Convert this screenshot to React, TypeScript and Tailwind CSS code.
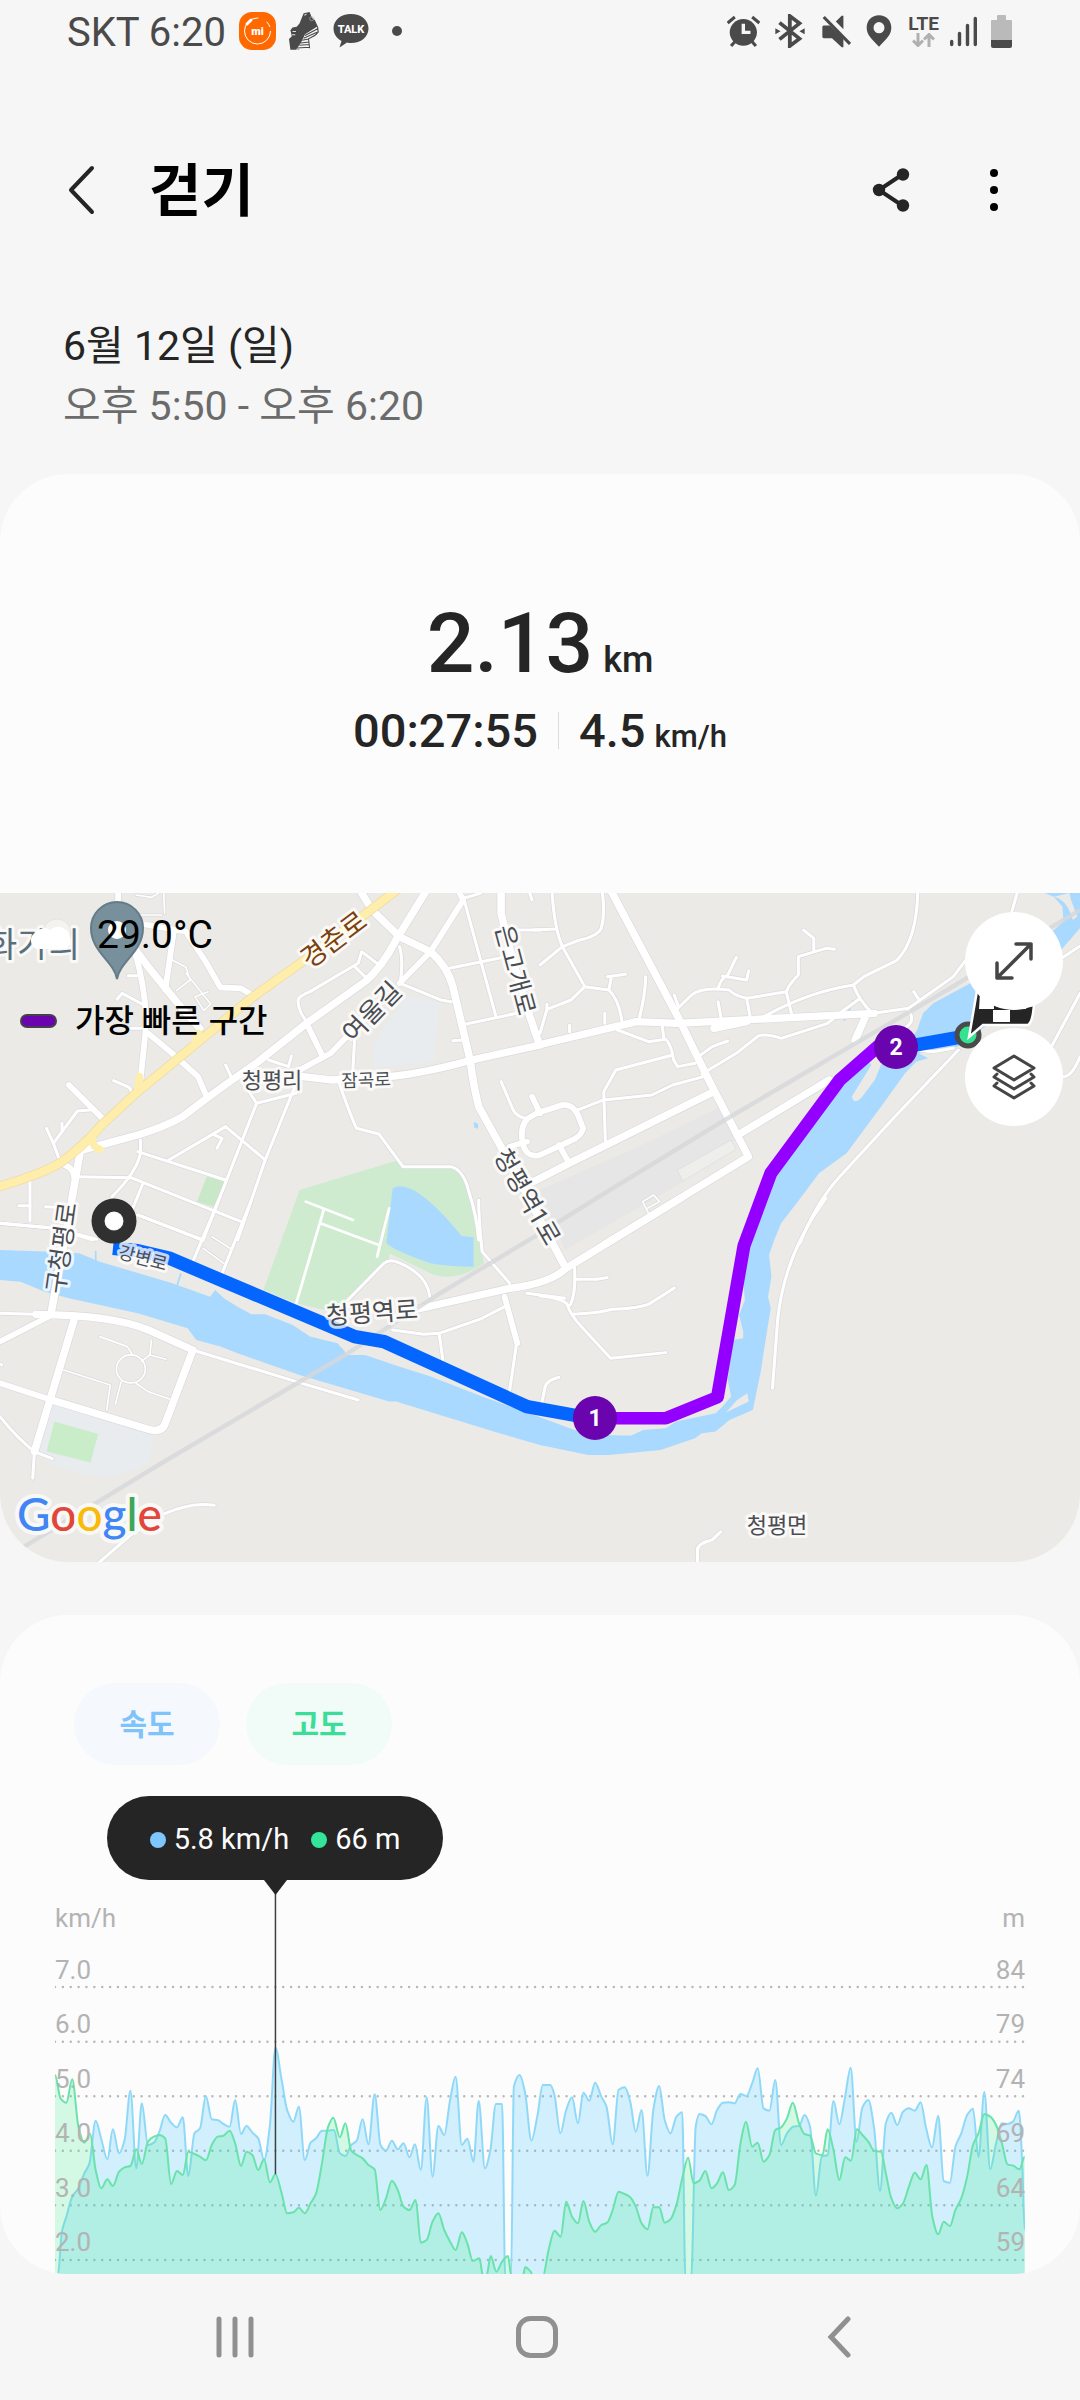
import { useState } from "react";

const ROADS: { tile: string; size: string; d: string }[] = [
  { tile: "nw", size: "xs", d: "M475 30L478 100M390 105H470M500 240L540 262L552 300L512 332M540 280L612 372L592 392L566 350L604 335M395 45L440 52L460 40" },
  { tile: "nw", size: "sm", d: "M655 740L770 840M1345 50L1440 410M1305 265L1480 228M1340 435L1500 400M1345 55L1395 40M1568 150L1490 150" },
  { tile: "nw", size: "sm", d: "M890 425Q862 385 866 358Q870 348 900 335L1040 250L1050 215L1095 250M1030 260L1065 295M1160 200Q1172 240 1162 310L1280 360L1310 365M1030 470L1024 580M1315 482L1345 480" },
  { tile: "nw", size: "sm", d: "M985 610Q1015 700 1035 745L1100 762L1170 860H1310Q1345 870 1360 930Q1385 1010 1390 1080" },
  { tile: "nw", size: "sm", d: "M720 630L745 670L860 640M745 670L590 1080M860 610L770 840L690 1080M655 555L672 592M780 540L838 560L846 528" },
  { tile: "nw", size: "sm", d: "M490 840L655 740M400 815L655 900M408 780V820Q395 880 325 950M225 890L380 893L700 1025M415 910L380 1000M400 1005L590 1080M622 765L645 775L630 805" },
  { tile: "nw", size: "sm", d: "M262 690L225 693L155 790L135 745M155 790L172 838M180 730V755M330 602L375 622L385 640M372 287H402M340 358L355 340L412 372M380 445H425M87 900V1022M55 977H88M132 980L165 982M0 1030L160 1045L270 1080M1455 605L1490 690Q1500 710 1530 716M1535 30L1545 60" },
  { tile: "nw", size: "md", d: "M343 30V180M400 130L540 155L600 250L640 322L700 325L742 352M505 150L480 330M390 210Q430 350 422 460L408 600M430 460L500 520L575 590L600 650M200 615L300 718M1250 215L1345 60L1330 30M1250 215L1160 310M1030 445L960 520L870 570M890 430L935 525M170 850Q215 860 215 890" },
  { tile: "nw", size: "lg", d: "M390 205L430 260L520 375L580 445M232 812L400 765Q480 740 530 710L600 655L660 610L750 545L890 430L1060 305Q1110 260 1150 180L1245 20M1045 30L1080 90L1160 170L1250 215Q1300 260 1315 320L1365 540Q1375 620 1390 680L1465 820L1643 1165" },
  { tile: "nw", size: "lg", d: "M880 590L960 600L1130 590Q1230 580 1370 540L1568 495M1455 20V100Q1500 300 1565 490M232 820L205 980L150 1290" },
  { tile: "nw", size: "md", d: "M1480 800L1530 785M1545 650L1568 700" },
  { tile: "ne", size: "lg", d: "M-5 495L280 425L400 430L970 400M205 30L400 410L490 600L605 830L190 1092M-20 905L85 850L495 640M575 765L840 600M505 445L600 425M915 480L945 410" },
  { tile: "ne", size: "md", d: "M-10 700L65 675Q95 672 110 705L125 745Q120 770 90 782L0 825Q-40 835 -50 790Q-60 740 -35 715L-10 700M55 795L85 850" },
  { tile: "ne", size: "sm", d: "M0 255L65 200L115 180Q165 170 178 145Q190 100 180 30M35 30Q40 140 65 200L130 320L200 330Q230 360 238 425M130 320L90 360L20 388L0 460M20 372V390M200 330L207 290M195 290L248 283M307 290Q305 350 287 420M188 400V430M86 435V455M-20 150L45 147" },
  { tile: "ne", size: "sm", d: "M395 390L440 345Q470 320 550 330Q560 345 600 355L715 335Q725 310 750 285V230L830 205L855 208M795 215V175L765 150M517 325Q525 295 545 285L570 232M530 288L600 300L606 272M600 355L610 410M715 335L730 400M517 365L525 410M390 345L402 380" },
  { tile: "ne", size: "sm", d: "M650 410Q780 335 910 315L940 290L1035 242Q1095 180 1097 30M910 315Q925 360 965 400M930 355L870 400L835 430L700 475Q660 460 635 467L570 520L470 582M225 450L315 485L365 478Q380 490 388 540L400 560L450 550M355 440L360 478M385 525L220 570L185 635L190 790M460 530L500 500L545 483M475 590L385 615L325 645L185 660L110 690" },
  { tile: "ne", size: "sm", d: "M970 400L1070 385L1200 290L1240 235M1065 385Q1095 420 1062 442M1085 335L1098 355M1095 510L1140 515L1200 505M1370 95L1388 30M1485 500L1568 340M1515 235L1568 198M1520 590Q1545 590 1568 530M1215 510L1030 710L870 890Q800 970 755 1090" },
  { tile: "ne", size: "xs", d: "M315 1000L298 965L330 945L347 965L312 985" },
  { tile: "sw", size: "md", d: "M0 425L150 345M0 550L150 600" },
  { tile: "sw", size: "sm", d: "M0 340L100 343M100 755L95 835M0 650Q50 715 100 755L152 776M560 450L860 545L1040 600M635 0L560 185M730 0L645 220M400 45L585 120M0 70L160 85L280 118" },
  { tile: "sw", size: "lg", d: "M105 343Q330 345 430 390L560 450L480 670Q470 700 430 688L150 600M215 360L100 755" },
  { tile: "sw", size: "sm", d: "M285 1090L380 1005L480 940Q560 905 622 916M1010 300L1115 190Q1130 178 1150 185Q1240 220 1248 290M1390 0Q1390 60 1400 155L1480 250M1140 390L1230 403L1275 400L1400 355L1465 320M1275 400L1286 480M1500 430Q1490 500 1480 570M1530 280L1640 295M-5 490L5 495" },
  { tile: "sw", size: "md", d: "M1465 290L1502 430" },
  { tile: "sw", size: "lg", d: "M1165 338L1265 315L1480 265Q1600 250 1643 205L1980 -8" },
  { tile: "sw", size: "xs", d: "M290 410L370 440L385 465M440 420L435 465L410 485M435 465L482 478M352 545L335 612M395 550L430 575L492 597M185 510L320 555L310 630M590 145L650 190M615 110L668 145" },
  { tile: "sw", size: "xs", d: "M338 507a42 42 0 1 0 84 0a42 42 0 1 0 -84 0" },
  { tile: "se", size: "sm", d: "M0 288Q70 295 80 315Q85 340 120 380L205 475L365 458M100 200Q105 280 88 315M100 237L165 238L195 233M95 343Q170 340 210 328Q290 325 320 310L390 264M5 610L15 560Q22 540 55 532M675 565L690 360Q710 160 830 -5M457 1090V1050Q457 1030 500 1020L525 995" },
];

const TILES: Record<string, string> = {
  nw: "translate(0 -39)",
  ne: "translate(1568 -39)",
  sw: "translate(0 921)",
  se: "translate(1568 921)",
};

const ROAD_WIDTH: Record<string, number> = { xs: 5, sm: 9, md: 17, lg: 22 };

const RIVER =
  "M0 1110L150 1115L230 1120L290 1145L500 1210L610 1250L625 1230L650 1255L690 1280L730 1303H770L850 1335L900 1370L980 1390L1010 1425H1060L1150 1457L1250 1490L1400 1550L1568 1612L1668 1650Q1718 1667 1833 1667L1868 1650L1933 1645L1963 1625L2078 1600Q2100 1580 2123 1550L2113 1500L2128 1380L2158 1375V1355L2146 1305L2163 1260L2158 1210L2168 1110L2208 960L2258 840L2438 580L2520 540L2530 555L2473 650Q2480 675 2500 655L2540 600L2560 550L2630 500L2663 450L2680 400L2710 370L2820 308L2900 240L3000 180L3060 150L3088 125L3085 80L3060 50L3033 39H3136V145L3085 205L3000 300L2860 440L2780 500L2668 520L2695 535L2660 545L2628 580L2558 680L2458 820L2378 880L2313 970L2268 1030L2248 1080L2233 1125L2240 1190L2230 1250L2238 1285L2223 1380L2208 1480L2186 1590L2118 1620L2078 1655L2038 1660L2018 1675L1918 1710L1768 1725H1708L1568 1695L1450 1660L1150 1565H1130L870 1485L690 1420L640 1400L570 1380L545 1345L400 1300L200 1255L130 1235L60 1205L0 1200Z";

const PLACES = [
  { name: "화가의", x: 33, y: 52, size: 34, rotate: 0, color: "#57707c" },
  { name: "경춘로", x: 334, y: 47, size: 27, rotate: -37, color: "#7a400f" },
  { name: "여울길", x: 372, y: 119, size: 26, rotate: -46, color: "#4a4d52" },
  { name: "은고개로", x: 515, y: 77, size: 25, rotate: 75, color: "#4a4d52" },
  { name: "청평리", x: 272, y: 187, size: 22, rotate: 0, color: "#4a4d52" },
  { name: "잠곡로", x: 366, y: 187, size: 18, rotate: -2, color: "#4a4d52" },
  { name: "청평역1로", x: 527, y: 304, size: 25, rotate: 60, color: "#4a4d52" },
  { name: "구청평로", x: 62, y: 355, size: 25, rotate: -82, color: "#4a4d52" },
  { name: "강변로", x: 143, y: 365, size: 18, rotate: 15, color: "#4a4d52" },
  { name: "청평역로", x: 372, y: 420, size: 25, rotate: -4, color: "#4a4d52" },
  { name: "청평면", x: 777, y: 632, size: 22, rotate: 0, color: "#4a4d52" },
];

const SPEED =
  "168,1190 180,1055 193,1010 210,950 228,925 245,880 260,850 278,722 295,780 312,838 328,748 346,820 362,780 379,632 396,865 412,670 430,795 447,788 463,755 480,705 497,728 514,742 531,712 547,888 565,760 581,745 598,648 615,718 632,720 649,732 667,740 683,660 700,762 716,738 733,758 750,775 767,840 784,735 800,503 818,600 834,690 852,725 868,680 885,840 902,788 918,775 935,752 953,752 970,750 987,820 1003,828 1020,795 1036,782 1053,718 1070,793 1088,643 1105,795 1121,812 1138,782 1155,808 1172,790 1189,832 1205,793 1222,870 1239,652 1256,890 1273,738 1290,765 1307,660 1323,590 1341,795 1357,776 1375,845 1390,662 1408,865 1424,810 1440,672 1458,672 1467,1190 1484,1190 1492,620 1509,585 1525,640 1543,782 1560,710 1576,615 1598,615 1610,645 1627,760 1644,690 1661,652 1678,730 1694,638 1711,662 1728,608 1746,650 1761,680 1779,793 1796,630 1814,622 1830,665 1846,755 1863,690 1880,887 1897,690 1914,618 1930,720 1947,760 1964,710 1981,697 1990,1190 2007,1190 2020,740 2031,702 2048,708 2066,733 2082,690 2099,668 2116,667 2133,670 2150,642 2167,648 2184,610 2200,565 2217,685 2234,692 2251,600 2268,795 2285,760 2303,740 2320,738 2336,705 2352,740 2369,947 2386,830 2403,825 2420,663 2437,733 2453,655 2470,563 2487,785 2504,682 2521,660 2538,745 2555,933 2572,730 2588,698 2605,735 2622,695 2639,685 2656,692 2673,667 2689,745 2706,802 2724,707 2740,903 2758,908 2774,800 2791,760 2808,705 2825,686 2841,830 2858,636 2875,868 2892,790 2909,730 2926,732 2941,725 2958,692 2968,850 2975,1050";

const ELEVATION =
  "160,585 176,655 193,668 210,598 228,740 245,788 262,762 278,870 294,925 312,898 328,918 346,875 362,862 379,858 396,808 412,852 430,785 447,770 463,765 480,775 497,912 514,873 531,885 547,815 565,822 581,830 598,841 615,795 632,770 649,767 667,752 683,790 700,858 716,815 733,825 750,870 767,838 784,907 800,883 818,940 834,1000 852,997 868,983 885,1000 902,970 918,940 935,850 953,740 968,713 987,772 1003,730 1020,812 1036,825 1053,835 1070,855 1088,868 1104,990 1121,955 1138,902 1155,930 1172,980 1189,990 1207,960 1222,1088 1239,1080 1256,1025 1273,1000 1290,1050 1307,1085 1323,1110 1341,1057 1357,1090 1373,1143 1392,1135 1403,1190 1412,1190 1425,1128 1441,1175 1458,1145 1475,1128 1485,1190 1518,1190 1525,1162 1541,1175 1548,1190 1576,1190 1593,1110 1610,1052 1628,1070 1644,965 1661,1010 1678,1030 1694,963 1711,1025 1728,1055 1746,1035 1763,1028 1779,990 1796,935 1814,942 1830,952 1846,980 1863,1030 1880,1048 1897,982 1914,982 1930,1028 1947,1018 1964,975 1981,895 1998,833 2014,910 2031,902 2048,873 2066,925 2082,910 2099,877 2116,930 2133,915 2150,790 2166,725 2184,800 2200,788 2217,845 2234,825 2251,750 2268,742 2285,715 2302,668 2320,730 2336,762 2352,767 2369,820 2388,825 2403,748 2420,810 2437,900 2454,832 2471,842 2488,748 2504,765 2521,785 2538,812 2558,815 2572,880 2588,955 2605,985 2622,970 2639,920 2656,878 2673,898 2690,855 2707,1010 2724,1063 2740,1025 2758,1038 2774,990 2791,955 2808,890 2825,795 2841,760 2858,702 2875,710 2892,735 2909,790 2925,853 2942,857 2960,868 2975,830";

const SPEED_TICKS = ["7.0", "6.0", "5.0", "4.0", "3.0", "2.0"];
const HEIGHT_TICKS = ["84", "79", "74", "69", "64", "59"];
const GRID = [321, 485, 649, 812, 976, 1140];

// cubic curve through the samples that stays flat at every local peak
const smooth = (data: string) => {
  const pts = data.split(" ").map((p) => p.split(",").map(Number));
  const slope = pts.map(([x, y], i) => {
    const prev = pts[i - 1];
    const next = pts[i + 1];
    if (!prev || !next || (y - prev[1]) * (next[1] - y) <= 0) return 0;
    const a = (y - prev[1]) / (x - prev[0]);
    const b = (next[1] - y) / (next[0] - x);
    return (2 * a * b) / (a + b);
  });
  return pts.reduce((d, [x, y], i) => {
    if (i === 0) return `M${x} ${y}`;
    const [px, py] = pts[i - 1];
    const h = (x - px) / 3;
    return `${d}C${px + h} ${py + slope[i - 1] * h} ${x - h} ${y - slope[i] * h} ${x} ${y}`;
  }, "");
};

const StatusBar = () => (
  <div className="flex h-[62px] items-center justify-between pr-[68px] pl-[67px] text-[#4a4a4a]">
    <div className="flex items-center">
      <span className="pt-1 text-[40px] leading-[58px]">SKT 6:20</span>
      <svg className="ml-[13px]" width="37" height="38" viewBox="0 0 37 38">
        <rect width="37" height="38" rx="13" fill="#ff6900" />
        <circle cx="18.500" cy="19" r="13" fill="none" stroke="#fff" strokeWidth="1" strokeDasharray="62 9 6 5" />
        <path d="M8 12L12 8" stroke="#fff" strokeWidth="3" strokeLinecap="round" />
        <text x="18.500" y="22.500" fontSize="11" fontWeight="900" textAnchor="middle" fill="#fff">
          mi
        </text>
      </svg>
      <svg className="ml-[13px]" width="30" height="38" viewBox="838 38 86 113" preserveAspectRatio="none">
        <path fill="#4a4a4a" d="M880 42L897 38L904 56L912 62L922 84L918 104L896 112L888 132L866 150L842 150L838 118L846 110L842 92L848 84L860 82L868 72Z" />
        <path fill="#f6f6f6" d="M884 104L918 82L922 90L914 104L894 116L897 146L858 150L872 130Z" />
        <path stroke="#4a4a4a" strokeWidth="3" fill="none" d="M884 108L920 88M880 116L918 98M876 122L894 118M872 130L895 127M868 137L896 135M860 145L896 143M920 84L922 98L912 108L894 118L897 146" />
        <circle cx="903" cy="58" r="6" fill="none" stroke="#aaa" strokeWidth="2" />
        <path stroke="#ddd" strokeWidth="3" d="M848 96H858M846 106H856M882 48L888 44" />
      </svg>
      <svg className="ml-[14px]" width="36" height="36" viewBox="0 0 36 36">
        <path fill="#4a4a4a" d="M18 1C8 1 .5 7 .5 15.500C.5 21 4 25.500 8.500 28L6.500 34.500L14 29.500Q16 30 18 30C28 30 35.500 24 35.500 15.500S28 1 18 1Z" />
        <text x="18" y="20" fontSize="11" fontWeight="800" textAnchor="middle" fill="#fff">
          TALK
        </text>
      </svg>
      <span className="ml-[23px] size-[10px] rounded-full bg-[#4a4a4a]" />
    </div>
    <div className="flex items-center">
      <svg width="33" height="32" viewBox="541 46 97 96" preserveAspectRatio="none">
        <circle cx="589" cy="98" r="40" fill="#4a4a4a" />
        <path d="M543 70L564 52M636 70L615 52" stroke="#4a4a4a" strokeWidth="9" />
        <path d="M566 124L553 139M613 124L626 139" stroke="#4a4a4a" strokeWidth="9" />
        <path d="M589 72V98H610" stroke="#f6f6f6" strokeWidth="10" fill="none" />
      </svg>
      <svg className="ml-[15px]" width="30" height="34" viewBox="681 43 87 102" preserveAspectRatio="none">
        <path d="M694 69L752 117L724 139V49L752 71L694 119" stroke="#4a4a4a" strokeWidth="11" fill="none" />
        <path d="M682 86L697 95L682 104ZM767 86L752 95L767 104Z" fill="#4a4a4a" />
      </svg>
      <svg className="ml-[17px]" width="29" height="33" viewBox="817 46 84 97" preserveAspectRatio="none">
        <path d="M822 77H840L879 115V141H874L846 114H822Q818 114 818 109V82Q818 77 822 77ZM857 65L874 48H879V88Z" fill="#4a4a4a" />
        <path d="M822 52L898 131" stroke="#4a4a4a" strokeWidth="9" />
      </svg>
      <svg className="ml-[15px]" width="26" height="32" viewBox="945 46 76 96" preserveAspectRatio="none">
        <path fillRule="evenodd" d="M983 47C962 47 947 63 947 84C947 106 962 117 983 141C1004 117 1019 106 1019 84C1019 63 1004 47 983 47ZM983 67a16 17 0 1 1 0 34a16 17 0 1 1 0 -34Z" fill="#4a4a4a" />
      </svg>
      <div className="ml-4 flex flex-col items-center">
        <span className="text-[19px] leading-[18px] font-bold">LTE</span>
        <svg width="23" height="14" viewBox="0 0 23 14">
          <path d="M6 0V12M1 7.500L6 12.500L11 7.500M17 14V2M12 6.500L17 1.500L22 6.500" stroke="#b0b0b0" strokeWidth="3" fill="none" />
        </svg>
      </div>
      <svg className="ml-[11px]" width="27" height="31" viewBox="0 0 27 31">
        <path d="M1.700 25.500V28.500M9.500 17.500V28.500M17.500 9.500V28.500M25.300 2.500V28.500" stroke="#4a4a4a" strokeWidth="3.400" strokeLinecap="round" />
      </svg>
      <svg className="ml-[14px]" width="21" height="33" viewBox="0 0 21 33">
        <path d="M6 1Q6 0 7 0H14Q15 0 15 1V5H20Q21 5 21 6V26H0V6Q0 5 1 5H6Z" fill="#bababa" />
        <path d="M0 25H21V31Q21 33 19 33H2Q0 33 0 31Z" fill="#4a4a4a" />
      </svg>
    </div>
  </div>
);

const Header = () => (
  <header className="mt-[62px] flex h-[132px] items-center justify-between pr-[82px] pl-[66px]">
    <div className="flex items-center">
      <button type="button" aria-label="뒤로">
        <svg width="30" height="52" viewBox="0 0 30 52">
          <path d="M26 4L5 26L26 48" fill="none" stroke="#252525" strokeWidth="4" strokeLinecap="round" strokeLinejoin="round" />
        </svg>
      </button>
      <h1 className="ml-[53px] pt-1 text-[57px] leading-[66px] font-bold text-black">걷기</h1>
    </div>
    <div className="flex items-center">
      <button type="button" aria-label="공유">
        <svg width="38" height="46" viewBox="0 0 38 46">
          <path d="M31 7L7 23L31 39" fill="none" stroke="#252525" strokeWidth="4" />
          <circle cx="31" cy="7.500" r="6.200" fill="#252525" />
          <circle cx="7" cy="23" r="6.200" fill="#252525" />
          <circle cx="31" cy="38.500" r="6.200" fill="#252525" />
        </svg>
      </button>
      <button type="button" aria-label="더보기" className="ml-[80px] flex flex-col gap-[9px]">
        <span className="size-2 rounded-full bg-black" />
        <span className="size-2 rounded-full bg-black" />
        <span className="size-2 rounded-full bg-black" />
      </button>
    </div>
  </header>
);

const RouteMap = () => (
  <svg className="block h-full w-full" viewBox="0 0 1080 669" preserveAspectRatio="xMidYMid slice">
    <rect width="1080" height="669" fill="#ebeae6" />
    <g transform="scale(0.3444 0.3333)" fill="none" strokeLinecap="round" strokeLinejoin="round">
      <g transform={TILES.nw} stroke="none">
        <path fill="#e6e6e6" d="M1568 930L1875 790L2090 680L2130 740L2150 770L1970 870L1985 905L1640 1110Z" />
        <path fill="#eeeeec" stroke="#dcdcdc" strokeWidth="2" d="M1968 870L2123 780L2138 808L1983 903Z" />
        <path fill="#e8ecef" d="M1180 350L1275 370L1260 545L1085 565V490L1110 450Z" />
        <path fill="#e8ecef" d="M150 1570L450 1660L430 1750Q350 1795 270 1790L160 1760L110 1725Z" />
        <path fill="#c9edc9" d="M158 1625L285 1662L263 1748L135 1715Z" />
        <path fill="#ceebd0" d="M870 930L1150 842L1170 860H1310Q1345 870 1360 930L1405 1150Q1330 1205 1260 1185L1130 1120V1140L1020 1260L960 1295L860 1270L765 1230Z" />
        <path fill="#c8e8c8" d="M600 890L655 900L622 980L572 965Z" />
        <path fill="#a9d9ff" d="M1140 925Q1160 910 1200 930Q1260 965 1340 1068L1375 1072V1160Q1300 1160 1250 1150Q1150 1115 1122 1090ZM1376 725L1388 732V746L1376 742Z" />
        <path fill="#a9d9ff" d={RIVER} />
        <path fill="#ebeae6" d="M2108 1598L2140 1560L2170 1540L2174 1565ZM3060 50Q3100 60 3115 120L3128 110L3110 60L3105 39Z" />
        <path stroke="#a9d9ff" strokeWidth="5" d="M278 1115V1150M525 1182L513 1220M2478 362L2452 420M2595 570Q2640 590 2650 535" />
      </g>
      <g stroke="#dadade">
        {ROADS.map((road) => (
          <path key={road.d} transform={TILES[road.tile]} d={road.d} strokeWidth={ROAD_WIDTH[road.size] + 4} />
        ))}
      </g>
      <g stroke="#fff">
        {ROADS.map((road) => (
          <path key={road.d} transform={TILES[road.tile]} d={road.d} strokeWidth={ROAD_WIDTH[road.size]} />
        ))}
      </g>
      <g transform={TILES.nw}>
        <path stroke="#fff" strokeWidth="8" d="M888 965L1025 1020M940 990L860 1270M930 1030L1100 1095M1130 985L1095 1130" />
        <path stroke="#ecd9a0" strokeWidth="28" d="M-10 922Q130 880 180 845Q240 800 300 730L400 635L735 350L885 240L1165 20" />
        <path stroke="#ffeeab" strokeWidth="22" d="M405 590L400 630M575 460L565 490M268 780Q268 800 290 808" />
        <path stroke="#ffeeab" strokeWidth="24" d="M-10 922Q130 880 180 845Q240 800 300 730L400 635L735 350L885 240L1165 20" />
        <path stroke="#d6d7d9" strokeWidth="13" strokeOpacity=".8" strokeLinecap="butt" d="M70 2000L480 1743L1010 1420L1270 1245L1568 1060L1763 935L2088 730L2418 530L2758 325L3136 90" />
        <path stroke="#0565ff" strokeWidth="40" strokeLinecap="butt" d="M328 1105L400 1112L490 1134L1030 1370L1115 1385L1530 1580L1728 1617" />
        <path stroke="#0565ff" strokeWidth="40" strokeLinecap="butt" d="M2603 505L2813 467" />
        <path stroke="#9400ff" strokeWidth="38" strokeLinecap="butt" d="M1728 1615H1933L2083 1552L2160 1098L2238 880L2438 600L2553 496H2603" />
      </g>
    </g>
    {PLACES.map((place) => (
      <text
        key={place.name}
        transform={`translate(${place.x} ${place.y}) rotate(${place.rotate})`}
        fontSize={place.size}
        fill={place.color}
        stroke="#fff"
        strokeOpacity=".75"
        strokeWidth="6"
        strokeLinejoin="round"
        paintOrder="stroke"
        textAnchor="middle"
        dominantBaseline="central"
      >
        {place.name}
      </text>
    ))}
    <path d="M117 86C114 68 91 59 91 35A26 26 0 0 1 143 35C143 59 120 68 117 86Z" fill="#788f9c" stroke="#647c89" strokeWidth="2" />
    <circle cx="117" cy="37" r="9" fill="#fff" />
    <circle cx="114" cy="328" r="16" fill="none" stroke="#303030" strokeWidth="13" />
    <circle cx="114" cy="328" r="9" fill="#fff" />
    <circle cx="968" cy="142" r="11" fill="#35e290" stroke="#4a4a4a" strokeWidth="5" />
    <path d="M978 92L969 144L983 132H1028Q1033 129 1034 110V92Z" fill="#252525" stroke="#fff" strokeWidth="2.500" />
    <path d="M980 100H994V116H979ZM993 117H1010V129H993ZM1010 100H1026V116H1010Z" fill="#fff" />
    {[
      { n: 1, x: 595, y: 525 },
      { n: 2, x: 896, y: 154 },
    ].map(({ n, x, y }) => (
      <g key={n}>
        <circle cx={x} cy={y} r="22" fill="#6a04ae" />
        <text x={x} y={y + 8} fontSize="23" fontWeight="700" fill="#fff" textAnchor="middle">
          {n}
        </text>
      </g>
    ))}
    <text x="17" y="638" fontSize="46" fontWeight="500" fontFamily="Lato" stroke="#f8f8f7" strokeWidth="8" strokeLinejoin="round" paintOrder="stroke">
      <tspan fill="#4285f4">G</tspan>
      <tspan fill="#e2453a">o</tspan>
      <tspan fill="#f9bb0a">o</tspan>
      <tspan fill="#4285f4">g</tspan>
      <tspan fill="#3ba757">l</tspan>
      <tspan fill="#e2453a">e</tspan>
    </text>
  </svg>
);

const Chart = () => {
  const speed = smooth(SPEED);
  const elevation = smooth(ELEVATION);
  return (
    <div className="relative mx-[55px] h-[394px] text-[26px] leading-8 text-[#b3b3b3]">
      <svg className="block h-full w-full" viewBox="160 0 2816 1182" preserveAspectRatio="none" fill="none">
        {GRID.map((y) => (
          <path key={y} d={`M160 ${y}H2976`} stroke="#b8b8b8" strokeWidth="2.500" strokeLinecap="round" strokeDasharray="0 7.870" vectorEffect="non-scaling-stroke" />
        ))}
        <path d={`${speed}V1200H168Z`} fill="#32c0ff" fillOpacity=".21" />
        <path d={speed} stroke="#8fd9f8" strokeWidth="2" vectorEffect="non-scaling-stroke" />
        <path d={`${elevation}V1200H160Z`} fill="#34ed84" fillOpacity=".2" />
        <path d={elevation} stroke="#69e3aa" strokeWidth="2" vectorEffect="non-scaling-stroke" />
        <path d="M800 0V883" stroke="#404040" strokeWidth="1.500" vectorEffect="non-scaling-stroke" />
      </svg>
      <span className="absolute top-[22px] left-0">km/h</span>
      <span className="absolute top-[22px] right-0">m</span>
      <div className="absolute top-[74px] left-0 flex h-[304px] flex-col justify-between">
        {SPEED_TICKS.map((tick) => (
          <span key={tick}>{tick}</span>
        ))}
      </div>
      <div className="absolute top-[74px] right-0 flex h-[304px] flex-col justify-between">
        {HEIGHT_TICKS.map((tick) => (
          <span key={tick}>{tick}</span>
        ))}
      </div>
    </div>
  );
};

const App = () => {
  const [showSpeed, setShowSpeed] = useState(true);
  const [showHeight, setShowHeight] = useState(true);
  return (
    <div className="w-full bg-[#f6f6f6] font-['Roboto','Noto_Sans_CJK_KR',sans-serif] text-[#252525]">
      <StatusBar />
      <Header />
      <div className="mt-[60px] px-[63px] text-[41px] leading-[60px]">
        <p>6월 12일 (일)</p>
        <p className="text-[#6b6b6b]">오후 5:50 - 오후 6:20</p>
      </div>

      <section className="mt-[38px] overflow-hidden rounded-[68px] bg-[#fcfcfc]">
        <div className="flex flex-col items-center gap-[21px] pt-32 pb-[139px] font-medium">
          <p className="flex items-baseline gap-[10px] text-[84px] leading-[84px]">
            2.13
            <span className="text-[36px] leading-9">km</span>
          </p>
          <div className="flex items-center text-[47px] leading-[47px]">
            <span>00:27:55</span>
            <span className="mx-5 h-[37px] w-px bg-[#dcdcdc]" />
            <p className="flex items-baseline gap-[9px]">
              4.5
              <span className="text-[31px] leading-8">km/h</span>
            </p>
          </div>
        </div>
        <div className="relative h-[669px]">
          <RouteMap />
          <div className="absolute top-5 left-[20px]">
            <div className="flex items-center">
              <svg className="ml-2" width="46" height="34" viewBox="0 0 46 34">
                <circle cx="29" cy="15" r="14" fill="#f5f3f0" stroke="#e6e4e0" />
                <path d="M9 31A9 9 0 0 1 9 14A9 9 0 0 1 22 12A12 12 0 0 1 42 20A8 8 0 0 1 36 31Z" fill="#fff" />
              </svg>
              <span className="ml-[23px] text-[39px] leading-[44px] text-black">29.0°C</span>
            </div>
            <div className="mt-[41px] flex items-center">
              <span className="h-[14px] w-[37px] rounded-full border-2 border-[#46404c] bg-[#6a04ae]" />
              <span className="ml-[18px] text-[32px] leading-[46px] font-medium text-black">가장 빠른 구간</span>
            </div>
          </div>
          <div className="absolute top-[19px] right-[17px] flex flex-col gap-[18px]">
            <button type="button" aria-label="지도 확대" className="flex size-[98px] items-center justify-center rounded-full bg-white">
              <svg width="40" height="40" viewBox="0 0 40 40">
                <path d="M3 37L37 3M22 3H37V18M3 22V37H18" fill="none" stroke="#454545" strokeWidth="3.500" strokeLinecap="round" strokeLinejoin="round" />
              </svg>
            </button>
            <button type="button" aria-label="지도 유형" className="flex size-[98px] items-center justify-center rounded-full bg-white">
              <svg width="44" height="46" viewBox="0 0 44 46">
                <path d="M22 2L42 14L22 26L2 14ZM5 20L2 23L22 35L42 23L39 20M5 29L2 32L22 44L42 32L39 29" fill="none" stroke="#454545" strokeWidth="3" strokeLinejoin="round" strokeLinecap="round" />
              </svg>
            </button>
          </div>
        </div>
      </section>

      <section className="mt-[53px] overflow-hidden rounded-[68px] bg-[#fcfcfc] pt-[68px]">
        <div className="flex gap-[26px] px-[74px] text-[30px] font-bold">
          <button type="button" aria-pressed={showSpeed} onClick={() => setShowSpeed((prev) => !prev)} className="h-[82px] w-[146px] rounded-full bg-[#f5f9fd] text-[#7fc3fb]">
            속도
          </button>
          <button type="button" aria-pressed={showHeight} onClick={() => setShowHeight((prev) => !prev)} className="h-[82px] w-[146px] rounded-full bg-[#f1fcf8] text-[#3bdd98]">
            고도
          </button>
        </div>
        <div className="relative z-10 mt-[31px] ml-[107px] flex h-[84px] w-[336px] items-center justify-center rounded-full bg-[#252525] pt-1 text-[29px] text-[#fcfcfc]">
          <span className="mr-2 size-4 rounded-full bg-[#7fc6ff]" />
          5.8 km/h
          <span className="mr-2 ml-[22px] size-4 rounded-full bg-[#35e49b]" />
          66 m
          <svg className="absolute top-full left-[157px]" width="23" height="15" viewBox="0 0 23 15">
            <path d="M0 0H23L11.500 15Z" fill="#252525" />
          </svg>
        </div>
        <Chart />
      </section>

      <nav className="grid h-[126px] grid-cols-3 items-center justify-items-center bg-[#f6f6f6] pr-[90px] pl-[84px]">
        <button type="button" aria-label="최근 앱">
          <svg width="38" height="42" viewBox="0 0 38 42">
            <path d="M3 3V39M19 3V39M35 3V39" stroke="#909090" strokeWidth="5" strokeLinecap="round" />
          </svg>
        </button>
        <button type="button" aria-label="홈">
          <svg width="42" height="42" viewBox="0 0 42 42">
            <rect x="2.500" y="2.500" width="37" height="37" rx="12" fill="none" stroke="#909090" strokeWidth="5" />
          </svg>
        </button>
        <button type="button" aria-label="이전">
          <svg width="24" height="42" viewBox="0 0 24 42">
            <path d="M21 3L4 21L21 39" fill="none" stroke="#909090" strokeWidth="5" strokeLinecap="round" />
          </svg>
        </button>
      </nav>
    </div>
  );
};

export default App;
